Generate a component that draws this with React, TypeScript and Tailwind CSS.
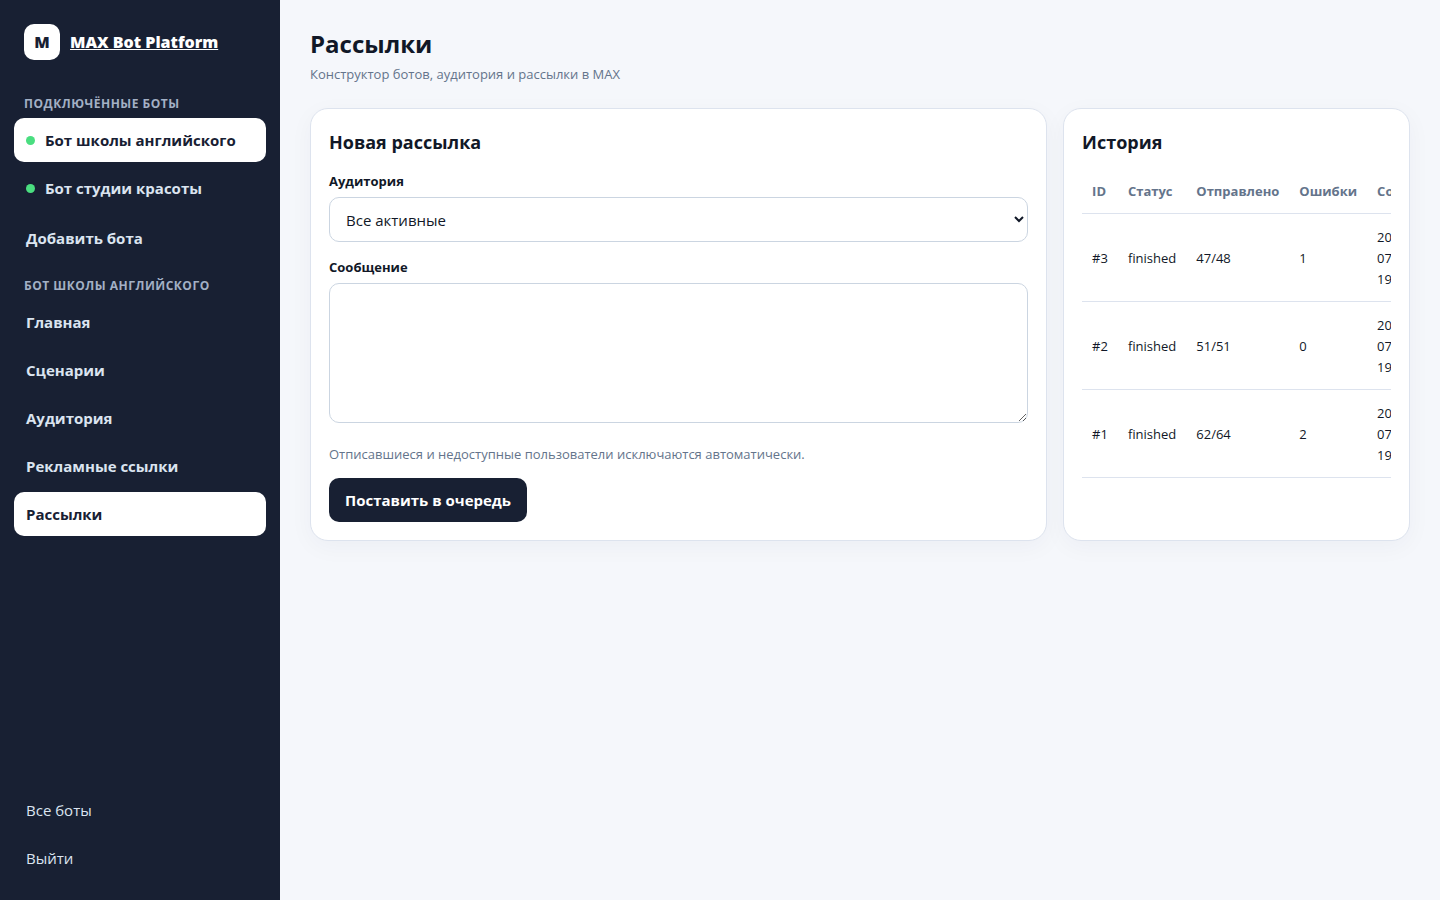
const bots = [
  { name: 'Бот школы английского', active: true },
  { name: 'Бот студии красоты', active: false },
];

const sections = [
  { name: 'Главная', active: false },
  { name: 'Сценарии', active: false },
  { name: 'Аудитория', active: false },
  { name: 'Рекламные ссылки', active: false },
  { name: 'Рассылки', active: true },
];

const history = [
  { id: 3, status: 'finished', sent: '47/48', errors: 1, created: ['2026-', '07-', '19'] },
  { id: 2, status: 'finished', sent: '51/51', errors: 0, created: ['2026-', '07-', '19'] },
  { id: 1, status: 'finished', sent: '62/64', errors: 2, created: ['2026-', '07-', '19'] },
];

const linkBase = 'flex h-11 items-center gap-2.5 rounded-[10px] px-3 text-[15px]';
const linkActive = 'bg-white font-bold text-[#182033]';
const linkIdle = 'font-bold text-[#dbe4f0]';
const groupTitle = 'px-2.5 text-xs leading-5 font-bold tracking-[0.5px] text-[#a3b0c5] uppercase';
const card =
  'min-w-0 rounded-[18px] border border-[#dde3ee] bg-white p-[18px] shadow-[0_6px_24px_rgba(31,35,75,0.04)]';
const field = 'block w-full rounded-[10px] border border-[#cbd5e1] bg-white text-[15px]';
const cell = 'px-2.5 pt-[13px] pb-[11px]';

function Sidebar() {
  return (
    <aside className="flex w-[280px] shrink-0 flex-col bg-[#182033] px-3.5 pt-6 pb-5">
      <a href="#" className="flex items-center gap-2.5 px-2.5 text-base font-extrabold text-white">
        <span className="flex size-9 items-center justify-center rounded-[10px] bg-white text-[#182033]">M</span>
        <span className="underline">MAX Bot Platform</span>
      </a>
      <h2 className={`mt-[34px] ${groupTitle}`}>Подключённые боты</h2>
      <nav className="mt-1 flex flex-col gap-1">
        {bots.map((bot) => (
          <a key={bot.name} href="#" className={`${linkBase} ${bot.active ? linkActive : linkIdle}`}>
            <span className="size-[9px] rounded-full bg-[#4ade80]" />
            {bot.name}
          </a>
        ))}
      </nav>
      <a href="#" className={`mt-1.5 ${linkBase} ${linkIdle}`}>
        Добавить бота
      </a>
      <h2 className={`mt-4 ${groupTitle}`}>Бот школы английского</h2>
      <nav className="mt-1 flex flex-col gap-1">
        {sections.map((item) => (
          <a key={item.name} href="#" className={`${linkBase} ${item.active ? linkActive : linkIdle}`}>
            {item.name}
          </a>
        ))}
      </nav>
      <div className="mt-auto flex flex-col gap-1">
        <a href="#" className={`${linkBase} text-[#dbe4f0]`}>
          Все боты
        </a>
        <a href="#" className={`${linkBase} text-[#dbe4f0]`}>
          Выйти
        </a>
      </div>
    </aside>
  );
}

export default function App() {
  return (
    <div className="flex min-h-screen bg-[#f5f7fb] font-['Segoe_UI','Open_Sans','Noto_Sans',sans-serif] text-[#111827]">
      <Sidebar />
      <main className="min-w-0 flex-1 px-[30px] pt-7 pb-8">
        <h1 className="text-2xl leading-8 font-bold">Рассылки</h1>
        <p className="mt-1 text-[13px] leading-5 text-[#64748b]">Конструктор ботов, аудитория и рассылки в MAX</p>
        <div className="mt-6 grid grid-cols-[17fr_8fr] gap-4">
          <section className={card}>
            <h2 className="text-lg leading-[30px] font-bold">Новая рассылка</h2>
            <form className="mt-3.5">
              <label htmlFor="audience" className="block text-[13px] leading-5 font-bold">
                Аудитория
              </label>
              <select id="audience" className={`mt-1.5 h-[45px] px-3 ${field}`}>
                <option>Все активные</option>
              </select>
              <label htmlFor="message" className="mt-[15px] block text-[13px] leading-5 font-bold">
                Сообщение
              </label>
              <textarea id="message" className={`mt-1.5 h-[140px] resize-y px-3 py-2.5 ${field}`} />
              <p className="mt-[21px] text-[13px] leading-5 text-[#64748b]">
                Отписавшиеся и недоступные пользователи исключаются автоматически.
              </p>
              <button
                type="button"
                className="mt-3.5 h-11 rounded-[10px] bg-[#182033] px-4 text-[15px] font-bold text-white"
              >
                Поставить в очередь
              </button>
            </form>
          </section>
          <section className={card}>
            <h2 className="text-lg leading-[30px] font-bold">История</h2>
            <div className="mt-[11px] overflow-hidden">
              <table className="w-full border-collapse text-left text-[13px] leading-[21px]">
                <thead className="text-[#64748b]">
                  <tr className="border-b border-[#dde3ee]">
                    <th className={cell}>ID</th>
                    <th className={cell}>Статус</th>
                    <th className={cell}>Отправлено</th>
                    <th className={cell}>Ошибки</th>
                    <th className={cell}>Создана</th>
                  </tr>
                </thead>
                <tbody>
                  {history.map((row) => (
                    <tr key={row.id} className="border-b border-[#dde3ee]">
                      <td className={cell}>#{row.id}</td>
                      <td className={cell}>{row.status}</td>
                      <td className={cell}>{row.sent}</td>
                      <td className={cell}>{row.errors}</td>
                      <td className={cell}>
                        {row.created.map((part) => (
                          <span key={part} className="block">
                            {part}
                          </span>
                        ))}
                      </td>
                    </tr>
                  ))}
                </tbody>
              </table>
            </div>
          </section>
        </div>
      </main>
    </div>
  );
}
